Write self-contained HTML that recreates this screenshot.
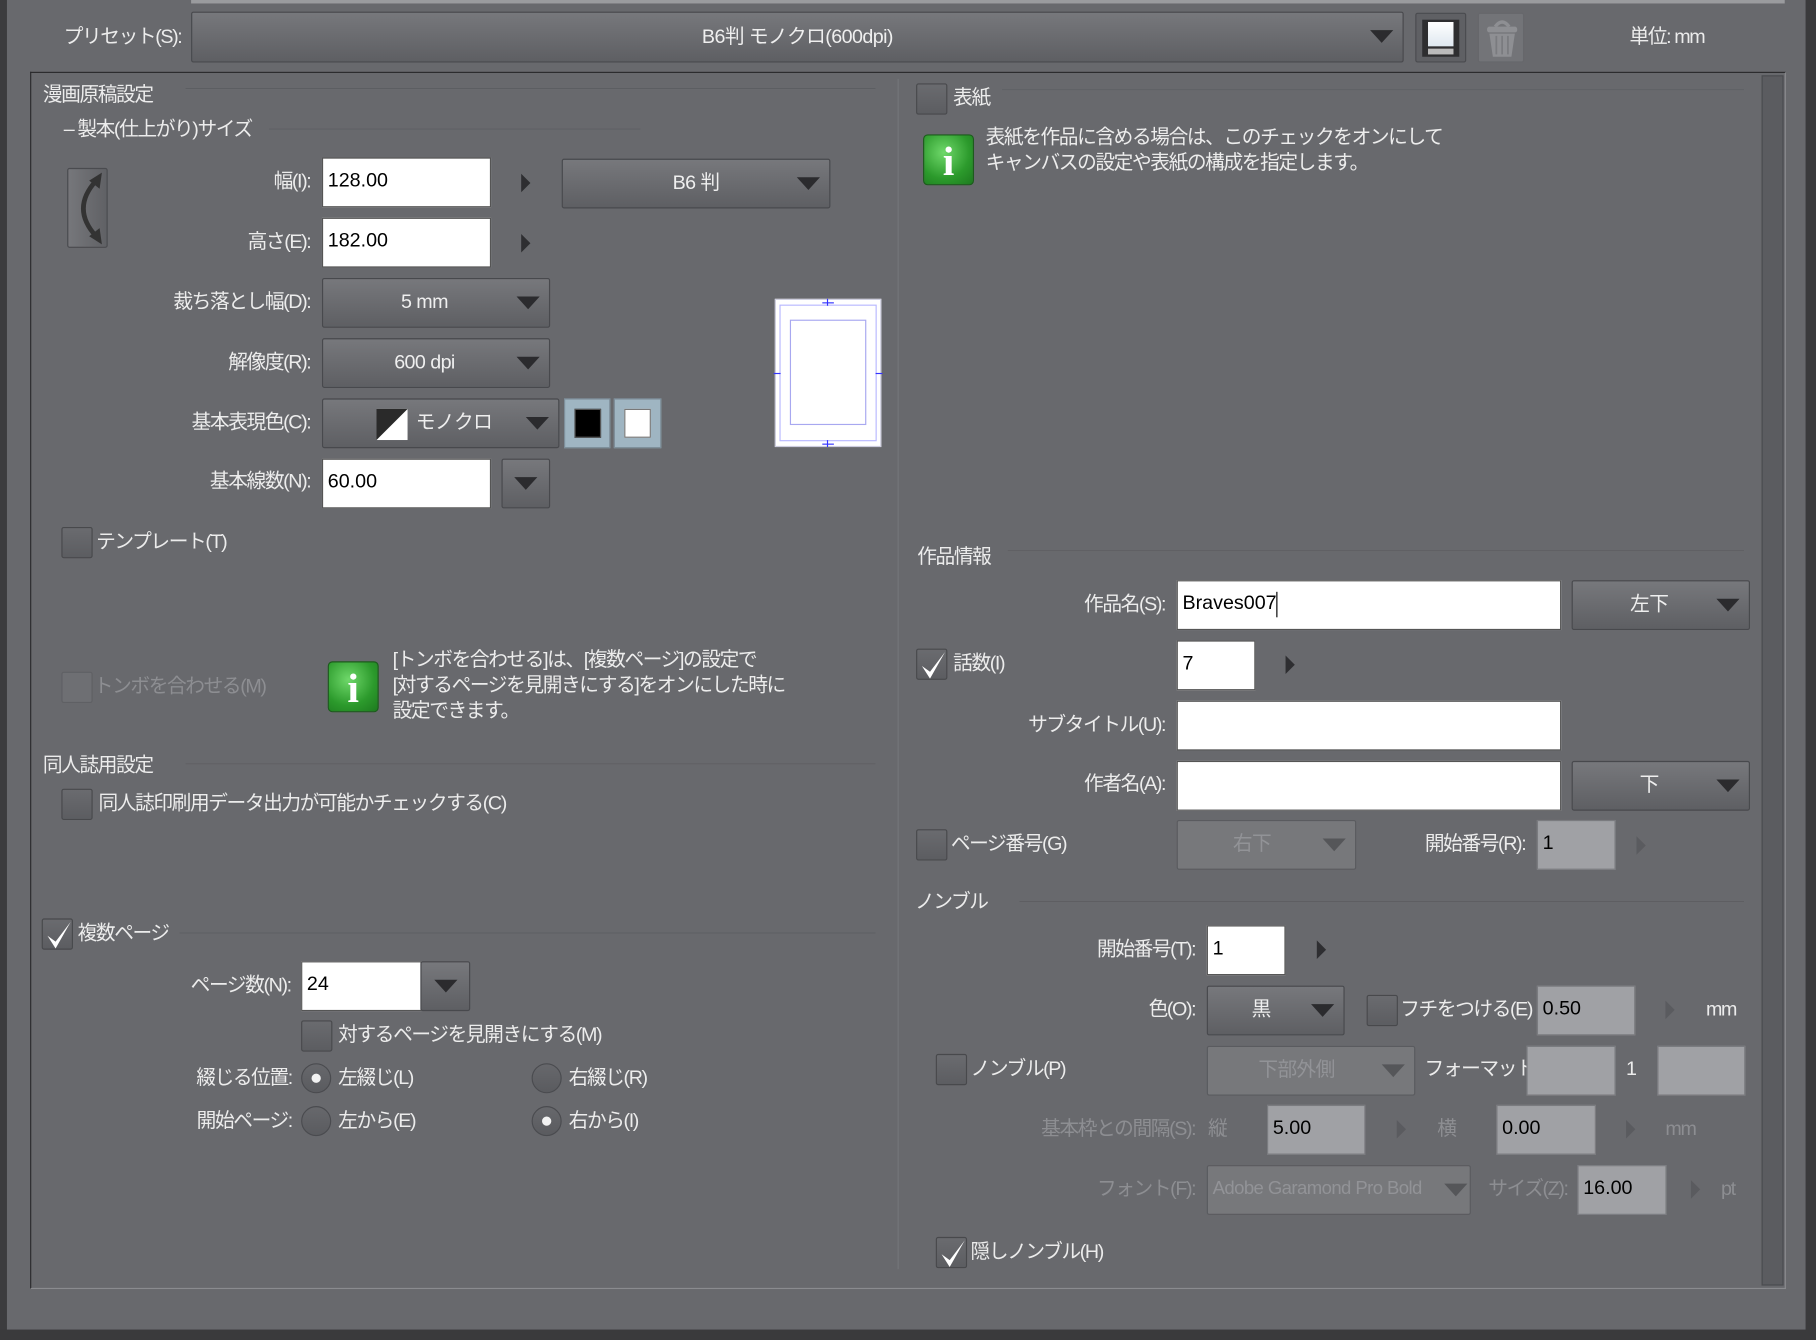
<!DOCTYPE html>
<html><head><meta charset="utf-8">
<style>
*{box-sizing:border-box;margin:0;padding:0}
body{width:1816px;height:1340px;overflow:hidden;background:#333;}
#w{position:absolute;left:0;top:0;width:1568px;height:1157px;transform:scale(1.15816,1.15816);transform-origin:0 0;background:#68696d;font-family:"Liberation Sans","Noto Sans CJK JP",sans-serif;font-size:17px;color:#ececec;overflow:hidden}
.a{position:absolute;white-space:nowrap;line-height:22px;letter-spacing:-1.2px}
.r{position:absolute;white-space:nowrap;line-height:22px;text-align:right;letter-spacing:-1.2px}
.dis{color:#8d8e92}
.in{position:absolute;background:#fff;border:1px solid #555;color:#000;padding-left:4px;line-height:38px;font-size:17px}
.gi{position:absolute;background:#a0a1a5;border:1px solid #7a7b7f;color:#000;padding-left:4px;line-height:38px}
.dd{position:absolute;background:linear-gradient(#77787c,#5e5f63);border:1px solid #48494d;border-radius:2px;text-align:center;line-height:40px;color:#efefef;letter-spacing:-0.5px}
.dd.d{background:#77787b;color:#929397;border-color:#5a5b5f}
.tri{position:absolute;width:0;height:0;border-left:10px solid transparent;border-right:10px solid transparent;border-top:11px solid #2b2b2e;top:15px;right:8px}
.dd.d .tri{border-top-color:#555659}
.ar{position:absolute;width:0;height:0;border-top:8px solid transparent;border-bottom:8px solid transparent;border-left:8px solid #2e2e31}
.ar.d{border-left-color:#5a5b5f}
.cb{position:absolute;width:27px;height:27px;background:linear-gradient(#6a6b6f,#5c5d61);border:1px solid #48494c;border-radius:2px}
.cb.d{background:#6e6f73;border-color:#5f6064}
.cb svg{position:absolute;left:2px;top:0}
.ln{position:absolute;height:1px;background:#838488;border-bottom:1px solid #5c5d61}
.rd{position:absolute;width:26px;height:26px;border-radius:50%;background:linear-gradient(#67686c,#5a5b5f);border:1px solid #4a4b4f}
.rd.on::after{content:"";position:absolute;left:8px;top:8px;width:8px;height:8px;border-radius:50%;background:#f2f2f2}
.info{position:absolute;width:44px;height:44px;border-radius:4px;background:radial-gradient(circle at 40% 35%,#6fd86a,#2c9a2c 60%,#1d7a1f);border:1px solid #1c5c1c}
.info span{position:absolute;left:0;right:0;top:2px;text-align:center;font-family:"Liberation Serif",serif;font-weight:bold;font-size:36px;line-height:40px;color:#fff}
</style></head><body><div id="w">
<div style="position:absolute;left:0;top:0;width:6px;height:1157px;background:#3c3c3e"></div>
<div style="position:absolute;left:1559px;top:0;width:9px;height:1157px;background:#3a3a3c"></div>
<div style="position:absolute;left:0;top:1148px;width:1568px;height:9px;background:#3a3a3c"></div>
<div style="position:absolute;left:165px;top:0;width:1376px;height:3px;background:#9a9b9e"></div>

<div class="a" style="left:55px;top:21px">プリセット(S):</div>
<div class="dd" style="left:165px;top:10px;width:1047px;height:44px;line-height:42px">B6判 モノクロ(600dpi)<div class="tri"></div></div>
<div style="position:absolute;left:1222px;top:11px;width:44px;height:43px;background:#5f6064;border:1px solid #4a4b4f;border-radius:2px">
 <div style="position:absolute;left:5px;top:5px;width:32px;height:32px;background:#2e2e30"></div>
 <div style="position:absolute;left:10px;top:7px;width:22px;height:21px;background:linear-gradient(#fff,#dfe8f0)"></div>
 <div style="position:absolute;left:10px;top:30px;width:22px;height:5px;background:#bbb"></div>
</div>
<div style="position:absolute;left:1276px;top:11px;width:40px;height:43px;background:#737478;border:1px solid #66676b;border-radius:2px">
 <svg width="40" height="43" viewBox="0 0 40 43"><path d="M14 11 Q20 3 26 11" stroke="#8e8f93" stroke-width="3" fill="none"/><rect x="7" y="11" width="26" height="5" rx="2" fill="#8e8f93"/><path d="M9 17 L31 17 L28 37 L12 37Z" fill="#8e8f93"/><path d="M15 19V35M20 19V35M25 19V35" stroke="#7a7b7f" stroke-width="1.5"/></svg>
</div>
<div class="a" style="left:1407px;top:21px">単位: mm</div>

<div style="position:absolute;left:26px;top:62px;width:1516px;height:1051px;border-top:1px solid #2a2a2c;border-left:1px solid #2a2a2c;border-right:1px solid #8a8b8f;border-bottom:1px solid #8a8b8f"></div>
<div style="position:absolute;left:1521px;top:65px;width:19px;height:1045px;background:#5b5c60;border:1px solid #4a4b4f"></div>
<div style="position:absolute;left:775px;top:68px;width:1px;height:1028px;background:#58595d;border-right:1px solid #77787c"></div>

<div class="a" style="left:37px;top:71px">漫画原稿設定</div>
<div class="ln" style="left:160px;top:76px;width:596px"></div>
<div class="a" style="left:55px;top:101px">– 製本(仕上がり)サイズ</div>
<div class="ln" style="left:232px;top:111px;width:321px"></div>
<div style="position:absolute;left:58px;top:145px;width:35px;height:69px;background:linear-gradient(90deg,#76777b,#606165);border:1px solid #4a4b4f;border-radius:2px">
<svg width="35" height="69" viewBox="0 0 35 69"><path d="M24 10 Q2 34 24 58" stroke="#333" stroke-width="4" fill="none"/><path d="M18 10 L29 3 L27 17Z M18 58 L29 65 L27 51Z" fill="#333"/></svg></div>

<div class="r" style="right:1300px;top:146px">幅(I):</div>
<div class="in" style="left:278px;top:136px;width:146px;height:43px">128.00</div>
<div class="ar" style="left:450px;top:150px"></div>
<div class="dd" style="left:485px;top:137px;width:232px;height:43px">B6 判<div class="tri"></div></div>
<div class="r" style="right:1300px;top:198px">高さ(E):</div>
<div class="in" style="left:278px;top:188px;width:146px;height:43px">182.00</div>
<div class="ar" style="left:450px;top:202px"></div>
<div class="r" style="right:1300px;top:250px">裁ち落とし幅(D):</div>
<div class="dd" style="left:278px;top:240px;width:197px;height:43px;padding-right:20px">5 mm<div class="tri"></div></div>
<div class="r" style="right:1300px;top:302px">解像度(R):</div>
<div class="dd" style="left:278px;top:292px;width:197px;height:43px;padding-right:20px">600 dpi<div class="tri"></div></div>
<div class="r" style="right:1300px;top:354px">基本表現色(C):</div>
<div class="dd" style="left:278px;top:344px;width:205px;height:43px;text-align:left;padding-left:80px">モノクロ<div class="tri"></div>
<svg style="position:absolute;left:46px;top:8px" width="27" height="27"><rect width="27" height="27" fill="#fff"/><path d="M0 0H27L0 27Z" fill="#2a2a2a"/></svg></div>
<div style="position:absolute;left:487px;top:344px;width:40px;height:43px;background:#9fb5c2;border:1px solid #7d8e99"><div style="position:absolute;left:8px;top:8px;width:23px;height:25px;background:#000;border:1px solid #555"></div></div>
<div style="position:absolute;left:530px;top:344px;width:41px;height:43px;background:#9fb5c2;border:1px solid #7d8e99"><div style="position:absolute;left:8px;top:8px;width:23px;height:25px;background:#fff;border:1px solid #777"></div></div>
<div class="r" style="right:1300px;top:405px">基本線数(N):</div>
<div class="in" style="left:278px;top:396px;width:146px;height:43px">60.00</div>
<div class="dd" style="left:433px;top:396px;width:42px;height:43px"><div class="tri" style="right:10px"></div></div>

<div style="position:absolute;left:669px;top:258px;width:92px;height:128px;background:#fff;border:1px solid #ccd">
 <div style="position:absolute;left:3px;top:4px;width:84px;height:118px;border:1px solid #b8b8ff"></div>
 <div style="position:absolute;left:12px;top:17px;width:66px;height:91px;border:1px solid #a8a8f0"></div>
 <div style="position:absolute;left:44px;top:-1px;width:1px;height:6px;background:#33f"></div>
 <div style="position:absolute;left:40px;top:2px;width:10px;height:1px;background:#33f"></div>
 <div style="position:absolute;left:44px;top:121px;width:1px;height:6px;background:#33f"></div>
 <div style="position:absolute;left:40px;top:124px;width:10px;height:1px;background:#33f"></div>
 <div style="position:absolute;left:-2px;top:63px;width:6px;height:1px;background:#33f"></div>
 <div style="position:absolute;left:86px;top:63px;width:6px;height:1px;background:#33f"></div>
</div>

<div class="cb" style="left:53px;top:455px"></div>
<div class="a" style="left:83px;top:457px">テンプレート(T)</div>
<div class="cb d" style="left:53px;top:580px"></div>
<div class="a dis" style="left:81px;top:582px">トンボを合わせる(M)</div>
<div class="info" style="left:283px;top:571px"><span>i</span></div>
<div class="a" style="left:339px;top:559px">[トンボを合わせる]は、[複数ページ]の設定で</div>
<div class="a" style="left:339px;top:581px">[対するページを見開きにする]をオンにした時に</div>
<div class="a" style="left:339px;top:603px">設定できます。</div>

<div class="a" style="left:37px;top:650px">同人誌用設定</div>
<div class="ln" style="left:160px;top:659px;width:596px"></div>
<div class="cb" style="left:53px;top:681px"></div>
<div class="a" style="left:85px;top:683px">同人誌印刷用データ出力が可能かチェックする(C)</div>

<div class="cb" style="left:36px;top:793px"><svg width="24" height="27" viewBox="0 0 24 27"><path d="M2 14 L9 25 L22 2 L9 19Z" fill="#fff"/></svg></div>
<div class="a" style="left:67px;top:795px">複数ページ</div>
<div class="ln" style="left:155px;top:805px;width:601px"></div>
<div class="r" style="right:1317px;top:840px">ページ数(N):</div>
<div class="in" style="left:260px;top:830px;width:104px;height:43px">24</div>
<div class="dd" style="left:363px;top:830px;width:43px;height:43px"><div class="tri" style="right:10px"></div></div>
<div class="cb" style="left:260px;top:881px"></div>
<div class="a" style="left:292px;top:883px">対するページを見開きにする(M)</div>
<div class="r" style="right:1316px;top:920px">綴じる位置:</div>
<div class="rd on" style="left:260px;top:918px"></div>
<div class="a" style="left:292px;top:920px">左綴じ(L)</div>
<div class="rd" style="left:459px;top:918px"></div>
<div class="a" style="left:491px;top:920px">右綴じ(R)</div>
<div class="r" style="right:1316px;top:957px">開始ページ:</div>
<div class="rd" style="left:260px;top:955px"></div>
<div class="a" style="left:292px;top:957px">左から(E)</div>
<div class="rd on" style="left:459px;top:955px"></div>
<div class="a" style="left:491px;top:957px">右から(I)</div>

<div class="cb" style="left:791px;top:72px"></div>
<div class="a" style="left:823px;top:74px">表紙</div>
<div class="ln" style="left:865px;top:77px;width:641px"></div>
<div class="info" style="left:797px;top:116px"><span>i</span></div>
<div class="a" style="left:851px;top:108px">表紙を作品に含める場合は、このチェックをオンにして</div>
<div class="a" style="left:851px;top:130px">キャンバスの設定や表紙の構成を指定します。</div>

<div class="a" style="left:792px;top:470px">作品情報</div>
<div class="ln" style="left:870px;top:475px;width:636px"></div>
<div class="r" style="right:562px;top:511px">作品名(S):</div>
<div class="in" style="left:1016px;top:501px;width:332px;height:43px">Braves007<span style="display:inline-block;width:1px;height:22px;background:#000;vertical-align:middle"></span></div>
<div class="dd" style="left:1357px;top:501px;width:154px;height:43px;padding-right:20px">左下<div class="tri"></div></div>
<div class="cb" style="left:791px;top:560px"><svg width="24" height="27" viewBox="0 0 24 27"><path d="M2 14 L9 25 L22 2 L9 19Z" fill="#fff"/></svg></div>
<div class="a" style="left:823px;top:562px">話数(I)</div>
<div class="in" style="left:1016px;top:553px;width:68px;height:43px">7</div>
<div class="ar" style="left:1110px;top:566px"></div>
<div class="r" style="right:562px;top:615px">サブタイトル(U):</div>
<div class="in" style="left:1016px;top:605px;width:332px;height:43px"></div>
<div class="r" style="right:562px;top:666px">作者名(A):</div>
<div class="in" style="left:1016px;top:657px;width:332px;height:43px"></div>
<div class="dd" style="left:1357px;top:657px;width:154px;height:43px;padding-right:20px">下<div class="tri"></div></div>
<div class="cb" style="left:791px;top:716px"></div>
<div class="a" style="left:821px;top:718px">ページ番号(G)</div>
<div class="dd d" style="left:1016px;top:708px;width:155px;height:43px;padding-right:25px">右下<div class="tri"></div></div>
<div class="r" style="right:251px;top:718px">開始番号(R):</div>
<div class="gi" style="left:1327px;top:708px;width:68px;height:43px">1</div>
<div class="ar d" style="left:1413px;top:722px"></div>

<div class="a" style="left:790px;top:768px">ノンブル</div>
<div class="ln" style="left:880px;top:778px;width:626px"></div>
<div class="r" style="right:536px;top:809px">開始番号(T):</div>
<div class="in" style="left:1042px;top:799px;width:68px;height:43px">1</div>
<div class="ar" style="left:1137px;top:812px"></div>
<div class="r" style="right:536px;top:861px">色(O):</div>
<div class="dd" style="left:1042px;top:851px;width:119px;height:43px;padding-right:25px">黒<div class="tri"></div></div>
<div class="cb" style="left:1180px;top:859px"></div>
<div class="a" style="left:1209px;top:861px">フチをつける(E)</div>
<div class="gi" style="left:1327px;top:851px;width:85px;height:43px">0.50</div>
<div class="ar d" style="left:1438px;top:864px"></div>
<div class="a" style="left:1473px;top:861px">mm</div>
<div class="cb" style="left:808px;top:910px"></div>
<div class="a" style="left:838px;top:912px">ノンブル(P)</div>
<div class="dd d" style="left:1042px;top:903px;width:180px;height:43px;padding-right:25px">下部外側<div class="tri"></div></div>
<div class="a" style="left:1230px;top:912px">フォーマット:</div>
<div class="gi" style="left:1318px;top:903px;width:77px;height:43px"></div>
<div class="a" style="left:1404px;top:912px">1</div>
<div class="gi" style="left:1431px;top:903px;width:76px;height:43px"></div>
<div class="r dis" style="right:536px;top:964px">基本枠との間隔(S):</div>
<div class="a dis" style="left:1043px;top:964px">縦</div>
<div class="gi" style="left:1094px;top:954px;width:85px;height:43px">5.00</div>
<div class="ar d" style="left:1206px;top:967px"></div>
<div class="a dis" style="left:1241px;top:964px">横</div>
<div class="gi" style="left:1292px;top:954px;width:86px;height:43px">0.00</div>
<div class="ar d" style="left:1404px;top:967px"></div>
<div class="a dis" style="left:1438px;top:964px">mm</div>
<div class="r dis" style="right:536px;top:1016px">フォント(F):</div>
<div class="dd d" style="left:1042px;top:1006px;width:228px;height:43px;text-align:left;padding-left:4px;font-size:16px">Adobe Garamond Pro Bold<div class="tri" style="right:2px"></div></div>
<div class="a dis" style="left:1285px;top:1016px">サイズ(Z):</div>
<div class="gi" style="left:1362px;top:1006px;width:77px;height:43px">16.00</div>
<div class="ar d" style="left:1460px;top:1019px"></div>
<div class="a dis" style="left:1486px;top:1016px">pt</div>
<div class="cb" style="left:808px;top:1068px"><svg width="24" height="27" viewBox="0 0 24 27"><path d="M2 14 L9 25 L22 2 L9 19Z" fill="#fff"/></svg></div>
<div class="a" style="left:838px;top:1070px">隠しノンブル(H)</div>
</div></body></html>
